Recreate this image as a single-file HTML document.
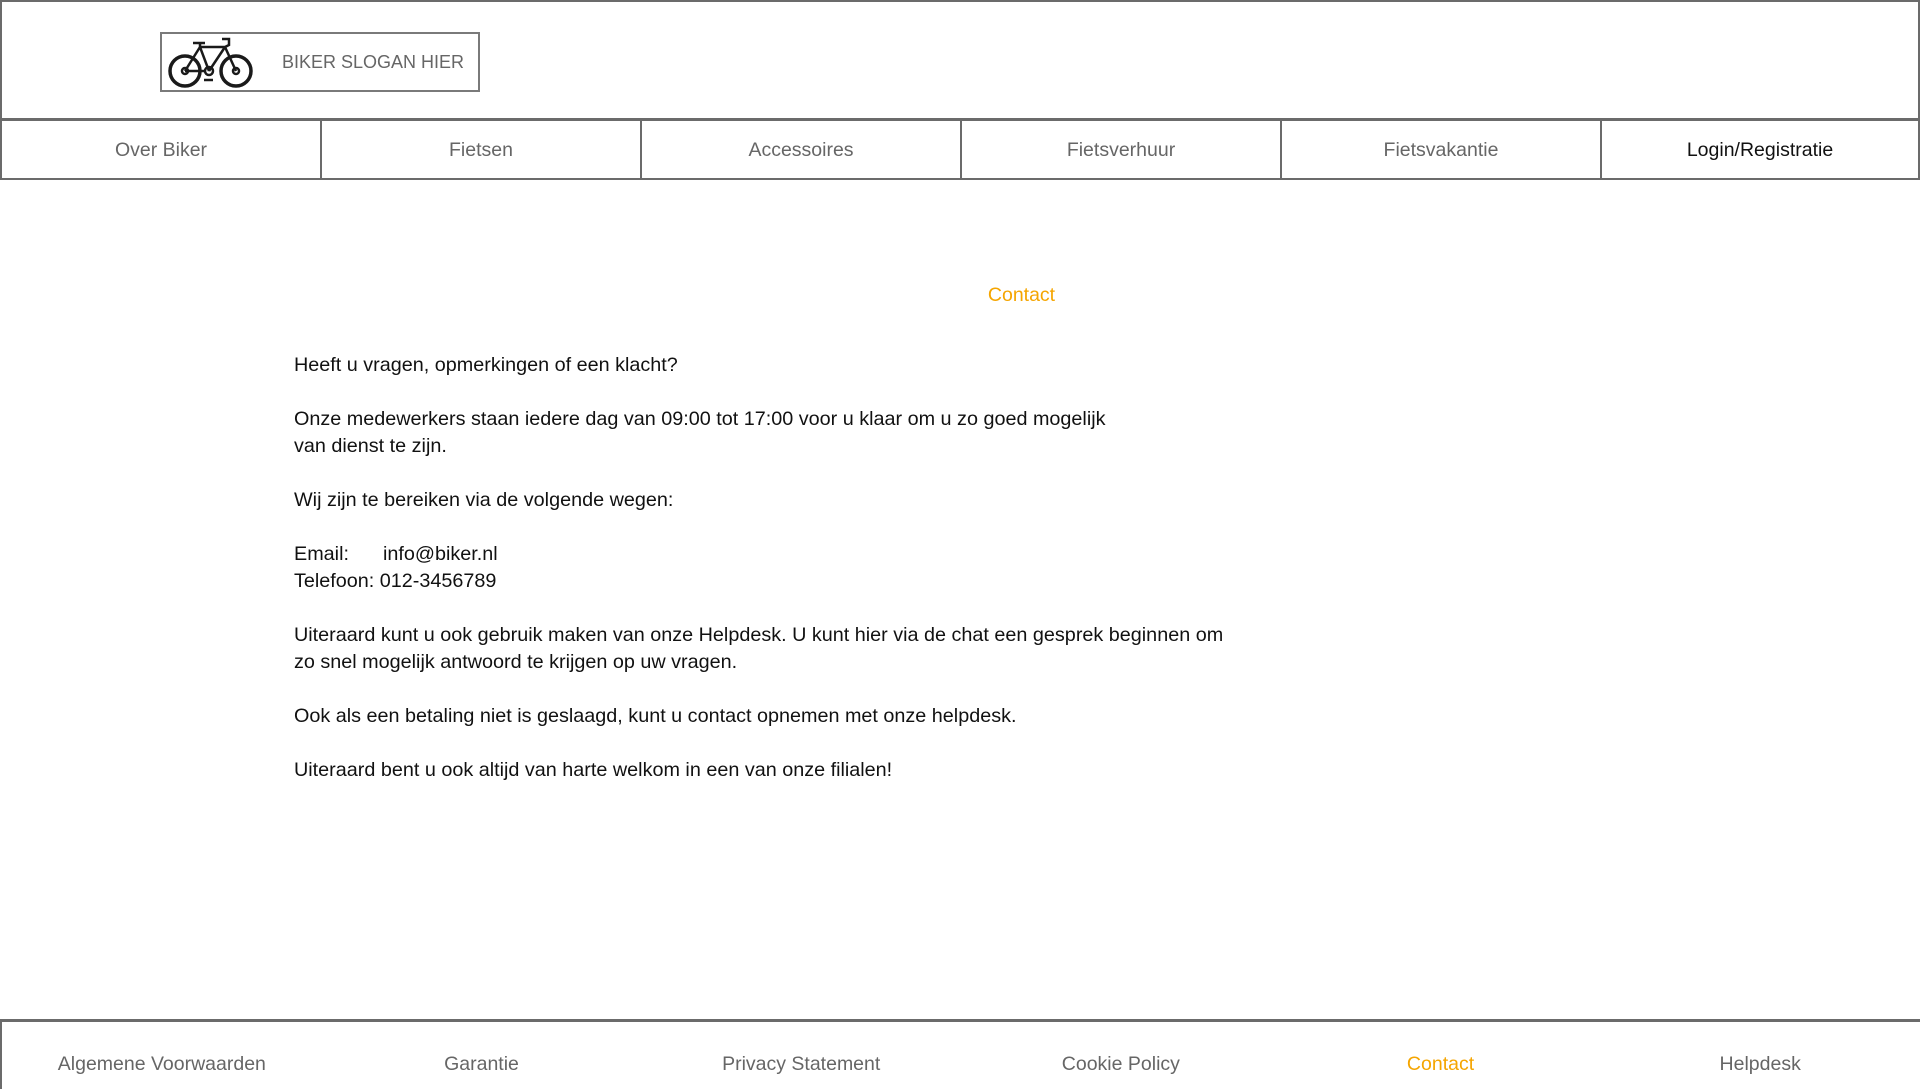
<!DOCTYPE html>
<html><head><meta charset="utf-8"><style>
*{margin:0;padding:0;box-sizing:border-box}
body{width:1920px;height:1080px;overflow:hidden;background:#fff;font-family:"Liberation Sans","DejaVu Sans",sans-serif;position:relative}
.hdr{position:absolute;left:0;top:0;width:1920px;height:161px;border:2px solid #6b6b6b;border-bottom:none}
.logo{position:absolute;left:160px;top:32px;width:320px;height:60px;border:2px solid #7a7a7a}
.logo span{position:absolute;left:120px;top:18px;font-size:18px;color:#666}
.nav{position:absolute;left:0;top:118px;width:1920px;height:62px;display:flex;border-top:3px solid #6b6b6b;border-bottom:2px solid #6b6b6b}
.nav div{width:320px;border-left:2px solid #6b6b6b;text-align:center;line-height:59px;font-size:19.5px;color:#666}
.nav div:last-child{border-right:2px solid #6b6b6b;color:#111}
.title{position:absolute;left:0;width:2043px;text-align:center;top:284px;font-size:19.5px;color:#f5a500}
.content{position:absolute;left:294px;top:352px;font-size:19.8px;line-height:27px;color:#111}
.content p{margin-bottom:27px}
.foot{position:absolute;left:0;top:1019px;width:1920px;height:70px;border-top:3px solid #6b6b6b;border-left:2px solid #6b6b6b;display:flex}
.foot div{width:320px;text-align:center;padding-top:31px;font-size:19.5px;color:#666}
</style></head><body>
<div class="hdr"></div>
<div class="logo">
<svg style="position:absolute;left:5px;top:3px" width="88" height="52" viewBox="0 0 88 52">
<g fill="none" stroke="#1a1a1a" stroke-width="3.5">
<circle cx="18" cy="34" r="15"/><circle cx="69" cy="34" r="15"/>
</g>
<g fill="none" stroke="#1a1a1a" stroke-width="2.5">
<circle cx="18" cy="34" r="3"/><circle cx="69" cy="34" r="3"/><circle cx="42" cy="34" r="4"/>
<path d="M18 34 L33 10 L42 34 M33 10 L58 10 L69 34 M42 34 L58 10 M18 34 L38 34 M26 6 L38 6 M33 6 L33 10 M55 2 L62 2 L62 8 L58 10 M37 43 L46 43"/>
</g></svg>
<span>BIKER SLOGAN HIER</span></div>
<div class="nav"><div>Over Biker</div><div>Fietsen</div><div>Accessoires</div><div>Fietsverhuur</div><div>Fietsvakantie</div><div>Login/Registratie</div></div>
<div class="title">Contact</div>
<div class="content">
<p>Heeft u vragen, opmerkingen of een klacht?</p>
<p>Onze medewerkers staan iedere dag van 09:00 tot 17:00 voor u klaar om u zo goed mogelijk<br>van dienst te zijn.</p>
<p>Wij zijn te bereiken via de volgende wegen:</p>
<p>Email:<span style="position:absolute;left:89px">info@biker.nl</span><br>Telefoon: 012-3456789</p>
<p>Uiteraard kunt u ook gebruik maken van onze Helpdesk. U kunt hier via de chat een gesprek beginnen om<br>zo snel mogelijk antwoord te krijgen op uw vragen.</p>
<p>Ook als een betaling niet is geslaagd, kunt u contact opnemen met onze helpdesk.</p>
<p>Uiteraard bent u ook altijd van harte welkom in een van onze filialen!</p>
</div>
<div class="foot"><div>Algemene Voorwaarden</div><div>Garantie</div><div>Privacy Statement</div><div>Cookie Policy</div><div style="color:#f5a500">Contact</div><div>Helpdesk</div></div>
</body></html>
